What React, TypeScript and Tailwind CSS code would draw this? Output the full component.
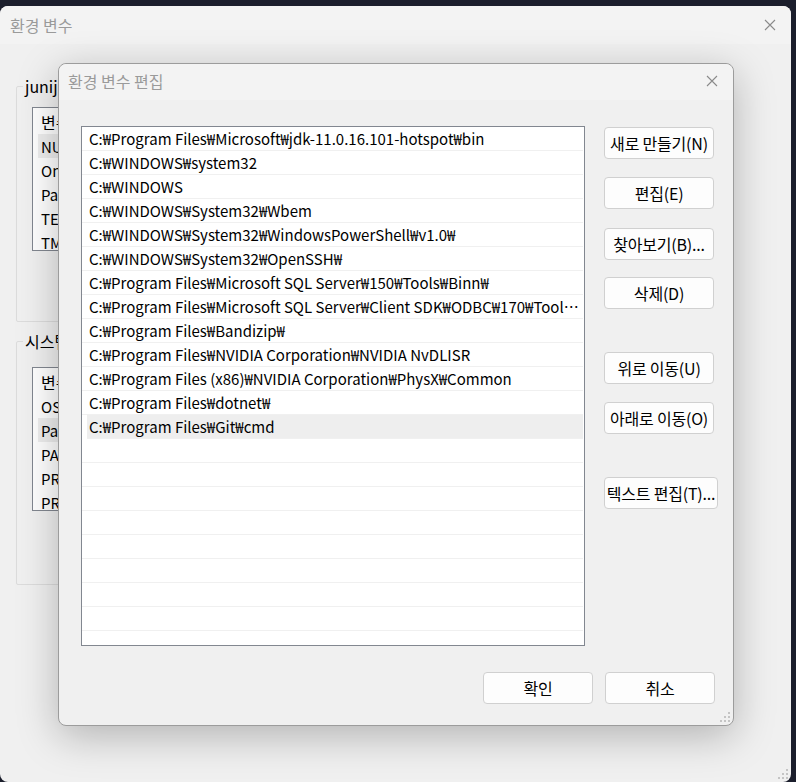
import React from "react";

const paths = [
  "C:₩Program Files₩Microsoft₩jdk-11.0.16.101-hotspot₩bin",
  "C:₩WINDOWS₩system32",
  "C:₩WINDOWS",
  "C:₩WINDOWS₩System32₩Wbem",
  "C:₩WINDOWS₩System32₩WindowsPowerShell₩v1.0₩",
  "C:₩WINDOWS₩System32₩OpenSSH₩",
  "C:₩Program Files₩Microsoft SQL Server₩150₩Tools₩Binn₩",
  "C:₩Program Files₩Microsoft SQL Server₩Client SDK₩ODBC₩170₩Tools₩Binn₩",
  "C:₩Program Files₩Bandizip₩",
  "C:₩Program Files₩NVIDIA Corporation₩NVIDIA NvDLISR",
  "C:₩Program Files (x86)₩NVIDIA Corporation₩PhysX₩Common",
  "C:₩Program Files₩dotnet₩",
  "C:₩Program Files₩Git₩cmd",
];

const userVars = ["NUMBER_OF_PROCESSORS", "OneDrive", "Path", "TEMP", "TMP"];
const sysVars = ["OS", "Path", "PATHEXT", "PROCESSOR_ARCHITECTURE", "PROCESSOR_IDENTIFIER"];

const font = { fontFamily: '"Noto Sans CJK KR", "Noto Sans", sans-serif' };

const CloseIcon = () => (
  <svg width="12" height="12" viewBox="0 0 12 12">
    <path d="M1 1 L11 11 M11 1 L1 11" stroke="#8a8a8a" strokeWidth="1.1" fill="none" />
  </svg>
);

const Grip = () => (
  <svg width="12" height="12" viewBox="0 0 12 12" className="absolute right-[2px] bottom-[2px]">
    <rect x="9" y="1" width="2" height="2" fill="#c4c4c4" />
    <rect x="5" y="5" width="2" height="2" fill="#c4c4c4" />
    <rect x="9" y="5" width="2" height="2" fill="#c4c4c4" />
    <rect x="1" y="9" width="2" height="2" fill="#c4c4c4" />
    <rect x="5" y="9" width="2" height="2" fill="#c4c4c4" />
    <rect x="9" y="9" width="2" height="2" fill="#c4c4c4" />
  </svg>
);

const WinButton = ({ label, className = "" }: { label: string; className?: string }) => (
  <button
    className={`h-[32px] w-[110px] whitespace-nowrap rounded-[4px] border border-[#d0d0d0] bg-[#fdfdfd] text-[16px] leading-none tracking-[-0.2px] text-black ${className}`}
  >
    {label}
  </button>
);

const VarList = ({ items, selected }: { items: string[]; selected: number }) => (
  <div className="h-[144px] w-[640px] border border-[#828790] bg-white pt-[1px] text-[15px]">
    <div className="flex h-[25px] items-center pl-[8px] text-[16px]">변수</div>
    {items.map((v, i) => (
      <div
        key={v}
        className={`ml-[5px] flex h-[24px] items-center pl-[3px] pt-[2px] ${i === selected ? "bg-[#eeeeee]" : ""}`}
      >
        {v}
      </div>
    ))}
  </div>
);

export default function App() {
  return (
    <div className="relative h-[782px] w-[796px] overflow-hidden bg-[#1b1e2c]" style={font}>
      {/* 환경 변수 (background window) */}
      <div className="absolute left-0 top-[6px] flex h-[776px] w-[791px] flex-col rounded-[8px] bg-[#f0f0f0]">
        <div className="flex h-[38px] items-center justify-between rounded-t-[8px] bg-[#f3f3f3] pl-[10px] pr-[15px]">
          <span className="text-[16px] text-[#9a9a9a]">환경 변수</span>
          <CloseIcon />
        </div>
        <div className="flex flex-col gap-[7px] px-[16px] pt-[30px]">
          <fieldset className="h-[248px] w-[690px] rounded-[2px] border border-[#dcdcdc] pl-[15px] pt-[9px]">
            <legend className="-ml-[9px] px-[2px] text-[16px] text-black">junij에 대한 사용자 변수(U)</legend>
            <VarList items={userVars} selected={0} />
          </fieldset>
          <fieldset className="h-[256px] w-[690px] rounded-[2px] border border-[#dcdcdc] pl-[15px] pt-[14px]">
            <legend className="-ml-[9px] px-[2px] text-[16px] text-black">시스템 변수(S)</legend>
            <VarList items={sysVars} selected={1} />
          </fieldset>
        </div>
        <Grip />
      </div>

      {/* 환경 변수 편집 dialog */}
      <div className="absolute left-[58px] top-[63px] flex h-[663px] w-[676px] flex-col rounded-[8px] border border-[#9c9c9c] bg-[#f0f0f0] shadow-[0_10px_40px_rgba(0,0,0,0.26)]">
        <div className="flex h-[36px] items-center justify-between rounded-t-[8px] bg-[#f3f3f3] pb-[2px] pl-[9px] pr-[15px]">
          <span className="text-[16px] text-[#9a9a9a]">환경 변수 편집</span>
          <CloseIcon />
        </div>
        <div className="flex pl-[22px] pt-[26px]">
          <div className="h-[520px] w-[504px] overflow-hidden border border-[#828790] bg-white pr-[1px] text-[15px] text-black">
            {paths.map((p, i) => (
              <div
                key={p}
                className={`box-border flex h-[24px] items-center border-b border-[#f0f0f0] pt-[2px] ${
                  i === 12 ? "ml-[5px] bg-[#eeeeee] pl-[2px]" : "pl-[7px]"
                }`}
              >
                <span className="truncate pr-[4px]">{p}</span>
              </div>
            ))}
            {Array.from({ length: 9 }).map((_, i) => (
              <div key={i} className="box-border h-[24px] border-b border-[#f0f0f0]" />
            ))}
          </div>
          <div className="ml-[19px] flex flex-col pt-[1px]">
            <WinButton label="새로 만들기(N)" />
            <WinButton label="편집(E)" className="mt-[18px]" />
            <WinButton label="찾아보기(B)..." className="mt-[19px]" />
            <WinButton label="삭제(D)" className="mt-[17px]" />
            <WinButton label="위로 이동(U)" className="mt-[43px]" />
            <WinButton label="아래로 이동(O)" className="mt-[18px]" />
            <WinButton label="텍스트 편집(T)..." className="mt-[43px] w-[114px]" />
          </div>
        </div>
        <div className="mt-[26px] flex justify-end gap-[12px] pr-[18px]">
          <WinButton label="확인" />
          <WinButton label="취소" />
        </div>
        <Grip />
      </div>
    </div>
  );
}
